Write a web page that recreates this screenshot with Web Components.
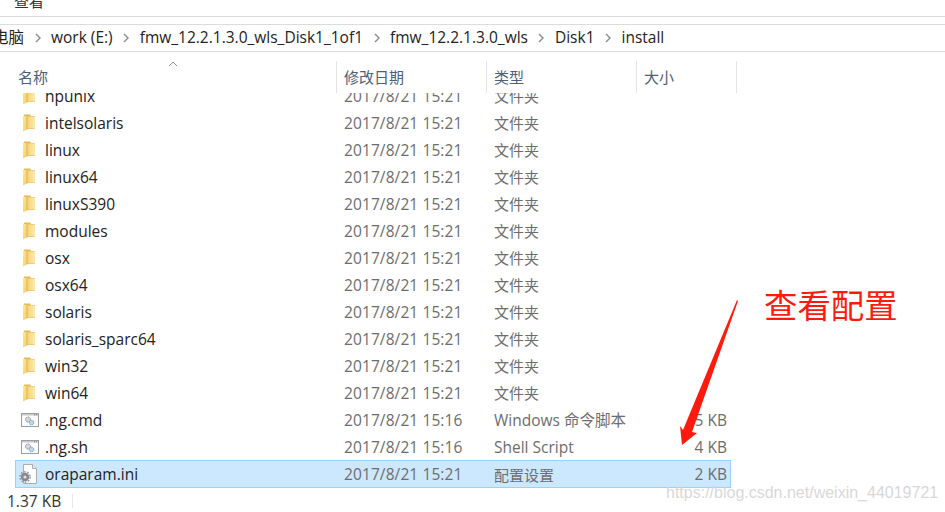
<!DOCTYPE html>
<html>
<head>
<meta charset="utf-8">
<style>
  html, body { margin: 0; padding: 0; background: #fff; overflow: hidden; }
  body { width: 945px; height: 512px; font-family: "Open Sans", "Noto Sans CJK SC", sans-serif; }
</style>
</head>
<body>
<explorer-window>
  <menu-strip>查看</menu-strip>
  <address-bar path="电脑|work (E:)|fmw_12.2.1.3.0_wls_Disk1_1of1|fmw_12.2.1.3.0_wls|Disk1|install"></address-bar>
  <list-header></list-header>
  <file-list>
    <file-row kind="folder" name="hpunix" date="2017/8/21 15:21" type="文件夹"></file-row>
    <file-row kind="folder" name="intelsolaris" date="2017/8/21 15:21" type="文件夹"></file-row>
    <file-row kind="folder" name="linux" date="2017/8/21 15:21" type="文件夹"></file-row>
    <file-row kind="folder" name="linux64" date="2017/8/21 15:21" type="文件夹"></file-row>
    <file-row kind="folder" name="linuxS390" date="2017/8/21 15:21" type="文件夹"></file-row>
    <file-row kind="folder" name="modules" date="2017/8/21 15:21" type="文件夹"></file-row>
    <file-row kind="folder" name="osx" date="2017/8/21 15:21" type="文件夹"></file-row>
    <file-row kind="folder" name="osx64" date="2017/8/21 15:21" type="文件夹"></file-row>
    <file-row kind="folder" name="solaris" date="2017/8/21 15:21" type="文件夹"></file-row>
    <file-row kind="folder" name="solaris_sparc64" date="2017/8/21 15:21" type="文件夹"></file-row>
    <file-row kind="folder" name="win32" date="2017/8/21 15:21" type="文件夹"></file-row>
    <file-row kind="folder" name="win64" date="2017/8/21 15:21" type="文件夹"></file-row>
    <file-row kind="script" name=".ng.cmd" date="2017/8/21 15:16" type="Windows 命令脚本" size="5 KB"></file-row>
    <file-row kind="script" name=".ng.sh" date="2017/8/21 15:16" type="Shell Script" size="4 KB"></file-row>
    <file-row kind="ini" name="oraparam.ini" date="2017/8/21 15:21" type="配置设置" size="2 KB" selected></file-row>
  </file-list>
  <status-bar>1.37 KB</status-bar>
  <red-note></red-note>
</explorer-window>

<script>
const FONT = '"Open Sans", "Noto Sans CJK SC", sans-serif';

class ExplorerWindow extends HTMLElement {
  constructor() {
    super();
    this.attachShadow({ mode: 'open' }).innerHTML = `
      <style>
        :host { display: flex; flex-direction: column; position: relative; width: 945px; height: 512px; overflow: hidden; background: #fff; }
      </style>
      <slot></slot>`;
  }
}

class MenuStrip extends HTMLElement {
  constructor() {
    super();
    this.attachShadow({ mode: 'open' }).innerHTML = `
      <style>
        :host { display: block; height: 16px; border-bottom: 1px solid #dcdcdc; overflow: hidden; font: 15px/14px ${FONT}; color: #333; padding-left: 14px; }
        span { display: block; margin-top: -6px; }
      </style>
      <span><slot></slot></span>`;
  }
}

class AddressBar extends HTMLElement {
  constructor() {
    super();
    const parts = this.getAttribute('path').split('|');
    const crumbs = parts.map((p, i) => `<span class="${i ? '' : 'first'}">${p}</span>` + (i < parts.length - 1
      ? `<svg width="6" height="10" viewBox="0 0 6 10"><path d="M1 1l4 4-4 4" fill="none" stroke="#8a8a8a" stroke-width="1.4"/></svg>` : '')).join('');
    this.attachShadow({ mode: 'open' }).innerHTML = `
      <style>
        :host { display: flex; align-items: center; gap: 10.5px; height: 26px; margin-top: 7px; border-top: 1px solid #dcdcdc; border-bottom: 1px solid #dcdcdc; font: 15.5px/24px ${FONT}; color: #222; white-space: nowrap; overflow: hidden; }
        .first { margin-left: -7px; }
        svg { flex: none; }
        span { position: relative; top: -1px; }
      </style>
      ${crumbs}`;
  }
}

class ListHeader extends HTMLElement {
  constructor() {
    super();
    this.attachShadow({ mode: 'open' }).innerHTML = `
      <style>
        :host { display: grid; grid-template-columns: 337px 150px 150px 100px; height: 32px; margin-top: 9px; font: 15px/32px ${FONT}; color: #4c607a; width: 737px; flex: none; overflow: hidden; }
        div { border-right: 1px solid #e5e5e5; padding-left: 7px; box-sizing: border-box; height: 32px; }
        .name { padding-left: 18px; position: relative; }
        svg { position: absolute; left: 168px; top: 0; }
      </style>
      <div class="name">名称<svg width="10" height="6" viewBox="0 0 10 6"><path d="M1 5l4-4 4 4" fill="none" stroke="#8f8f8f"/></svg></div>
      <div>修改日期</div><div>类型</div><div>大小</div>`;
  }
}

class FileList extends HTMLElement {
  constructor() {
    super();
    this.attachShadow({ mode: 'open' }).innerHTML = `
      <style>
        :host { display: block; height: 397px; overflow: hidden; flex: none; }
        .scroller { margin-top: -11px; padding-left: 15px; }
      </style>
      <div class="scroller"><slot></slot></div>`;
  }
}

// all icons share a 24x20 box, the box starts where the row content starts
const ICONS = {
  folder: `<svg width="24" height="20" viewBox="0 0 24 20">
      <defs>
        <linearGradient id="b" x1="0" x2="1" y1="0" y2="0"><stop offset="0" stop-color="#f3cf6e"/><stop offset="1" stop-color="#fdebae"/></linearGradient>
        <linearGradient id="l" x1="0" x2="1" y1="0" y2="1"><stop offset="0" stop-color="#fbe6a2"/><stop offset="1" stop-color="#f6cf68"/></linearGradient>
      </defs>
      <path d="M8 1.5h6l1 1.5h4v13H8z" fill="#e5bb52"/>
      <rect x="10" y="3.5" width="9" height="12" fill="url(#b)"/>
      <path d="M7 2.5l4 1V16.5l-4 2z" fill="url(#l)"/>
      <path d="M11 3.5V16.5" stroke="#e2b54a" fill="none"/>
    </svg>`,
  script: `<svg width="24" height="20" viewBox="0 0 24 20">
      <rect x="5.5" y="3.5" width="17" height="13" fill="#fbfcfd" stroke="#9a9ea1"/>
      <rect x="6" y="4" width="16" height="1.6" fill="#c9cdd0"/>
      <path d="M18 4.8h1M20 4.8h1" stroke="#777"/>
      <circle cx="12" cy="9.5" r="2.5" fill="#d5d8da" stroke="#85898c" stroke-dasharray="1.2 .7"/>
      <circle cx="15.5" cy="12.5" r="2.3" fill="#b9d6ec" stroke="#6f97b8" stroke-dasharray="1.2 .7"/>
    </svg>`,
  ini: `<svg width="24" height="20" viewBox="0 0 24 20">
      <path d="M7.5.5h9l4 4v15h-13z" fill="#fdfdfe" stroke="#a9aeb3"/>
      <path d="M16.5.5v4h4" fill="#e9ecef" stroke="#a9aeb3"/>
      <circle cx="9" cy="13" r="4.2" fill="#85898d"/>
      <circle cx="9" cy="13" r="5.1" fill="none" stroke="#9a9ea2" stroke-width="1.6" stroke-dasharray="1.7 1.5"/>
      <circle cx="9" cy="13" r="1.6" fill="#dfe2e4"/>
    </svg>`
};

class FileRow extends HTMLElement {
  constructor() {
    super();
    const a = n => this.getAttribute(n) || '';
    const allCjk = /^[^\x00-\x7f]+$/.test(a('type'));
    this.attachShadow({ mode: 'open' }).innerHTML = `
      <style>
        :host { display: grid; grid-template-columns: 29px 299px 150px 150px 83px; box-sizing: border-box; width: 716px; height: 27px; align-items: center; font: 15.5px ${FONT}; color: #6d6d6d; white-space: nowrap; border: 1px solid transparent; }
        :host([selected]) { background: #cce8ff; border-color: #99d1ff; height: 28px; margin-bottom: -1px; }
        .icon { display: flex; height: 20px; }
        .name { color: #222; }
        .date { letter-spacing: .1px; }
        .cjk { font-size: 15px; }
        .size { text-align: right; }
      </style>
      <div class="icon">${ICONS[a('kind')]}</div>
      <div class="name">${a('name')}</div>
      <div class="date">${a('date')}</div>
      <div class="${allCjk ? 'cjk' : ''}">${a('type')}</div>
      <div class="size">${a('size')}</div>`;
  }
}

class StatusBar extends HTMLElement {
  constructor() {
    super();
    this.attachShadow({ mode: 'open' }).innerHTML = `
      <style>
        :host { display: flex; align-items: center; font: 15.5px/20px ${FONT}; color: #333; padding: 1px 0 0 7px; flex: none; }
        .text { width: 65px; }
        .sep { width: 1px; height: 14px; background: #e8e8e8; }
      </style>
      <div class="text"><slot></slot></div><div class="sep"></div>`;
  }
}

// annotation drawn on top of the screenshot, so it sits on its own canvas
class RedNote extends HTMLElement {
  constructor() {
    super();
    this.attachShadow({ mode: 'open' }).innerHTML = `
      <style>
        :host { position: absolute; inset: 0; display: block; pointer-events: none; }
        .label { position: absolute; left: 764px; top: 284px; font: 33.4px/40px "Noto Sans CJK SC", sans-serif; color: #ff1a0d; white-space: nowrap; }
        .mark { position: absolute; left: 666px; top: 483px; font: 16px/20px "Liberation Sans", sans-serif; color: #d8d8d8; white-space: nowrap; }
        svg { position: absolute; left: 0; top: 0; }
      </style>
      <svg width="945" height="512"><polygon points="737,300 738,301 692,432 697,433 682,445 680,426 683,430" fill="#ff1a0d"/></svg>
      <div class="label">查看配置</div>
      <div class="mark">https://blog.csdn.net/weixin_44019721</div>`;
  }
}

customElements.define('explorer-window', ExplorerWindow);
customElements.define('menu-strip', MenuStrip);
customElements.define('address-bar', AddressBar);
customElements.define('list-header', ListHeader);
customElements.define('file-list', FileList);
customElements.define('file-row', FileRow);
customElements.define('status-bar', StatusBar);
customElements.define('red-note', RedNote);
</script>
</body>
</html>
